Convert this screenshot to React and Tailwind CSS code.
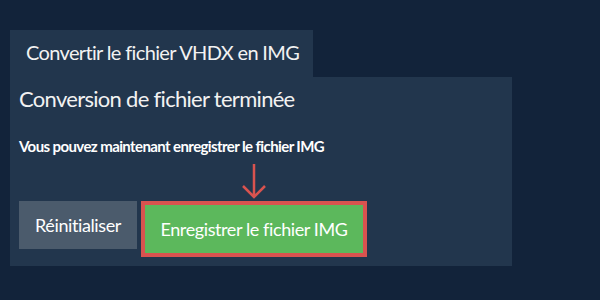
import React from "react";

function DownArrow() {
	return (
		<svg width="26" height="36" viewBox="0 0 26 36" fill="none">
			<path
				d="M13 1 V34 M2 23 L13 34 L24 23"
				stroke="#d9534f"
				strokeWidth="2.5"
			/>
		</svg>
	);
}

export default function App() {
	return (
		<div
			className="w-[600px] h-[300px] bg-[#12233a] pt-[30px] px-[10px] text-white"
			style={{ fontFamily: "Lato, 'Open Sans', sans-serif" }}
		>
			<div className="w-[303px] h-[47px] bg-[#22364d] pl-4 text-[20px] leading-[44px] tracking-[-0.65px] whitespace-nowrap font-normal text-[#f2f2f2]">
				Convertir le fichier VHDX en IMG
			</div>
			<div className="w-[502px] h-[189px] bg-[#22364d] px-[9px] pt-[8px]">
				<h2 className="text-[22px] leading-[28px] font-normal tracking-[-0.7px] whitespace-nowrap text-[#f2f2f2]">
					Conversion de fichier terminée
				</h2>
				<p className="mt-[23px] text-[15px] leading-[20px] font-bold tracking-[-0.6px] whitespace-nowrap">
					Vous pouvez maintenant enregistrer le fichier IMG
				</p>
				<div className="flex items-start gap-[4px] mt-[45px]">
					<button
						type="button"
						className="w-[118px] h-[48px] bg-[#4b5b6c] text-[18px] tracking-[-0.4px] font-normal text-white"
					>
						Réinitialiser
					</button>
					<div className="relative">
						<div className="absolute left-1/2 -translate-x-1/2 -top-[38px] leading-none">
							<DownArrow />
						</div>
						<button
							type="button"
							className="w-[226px] h-[56px] bg-[#5cb85c] border-4 border-[#d9534f] text-[18px] tracking-[-0.4px] font-normal text-white whitespace-nowrap"
						>
							Enregistrer le fichier IMG
						</button>
					</div>
				</div>
			</div>
		</div>
	);
}
